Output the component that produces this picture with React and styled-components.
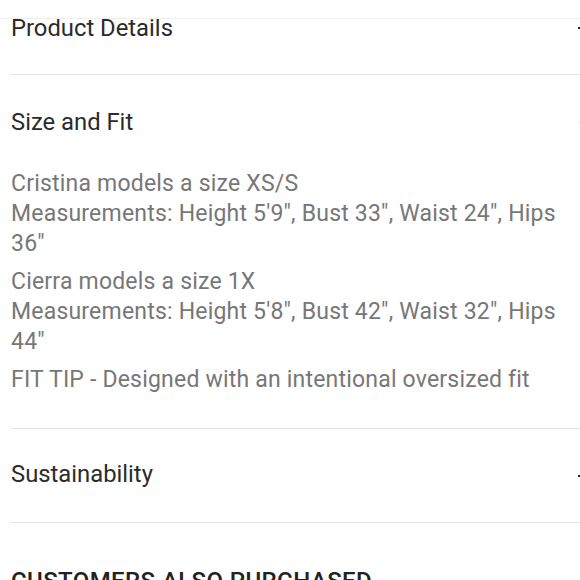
import React from "react"
import styled, { createGlobalStyle } from "styled-components"

const GlobalStyle = createGlobalStyle`
  html, body {
    margin: 0;
    padding: 0;
    background: #fff;
  }
  body {
    font-family: Roboto, "Liberation Sans", Arial, sans-serif;
    -webkit-font-smoothing: antialiased;
  }
`

const Screen = styled.div`
  width: 580px;
  height: 580px;
  display: flex;
  flex-direction: column;
  overflow: hidden;
  background: #fff;
`

const TopBar = styled.div`
  flex: 0 0 18px;
  border-bottom: 1px solid #efefef;
  background: #fff;
`

const Scroller = styled.div`
  flex: 1;
  overflow: hidden;
`

// page is scrolled a little, so the first header sits under the top bar
const Content = styled.div`
  margin-top: -38px;
  padding-left: 11px;
  width: 600px;
`

const Section = styled.section`
  border-bottom: 1px solid #e3e3e3;
`

const Header = styled.div`
  height: 93px;
  display: flex;
  align-items: center;
  justify-content: space-between;
`

const Title = styled.h3`
  margin: 0 0 ${(p) => (p.$raise ? 3 : 0)}px;
  font-size: 23.8px;
  font-weight: 400;
  color: #2b2b2b;
`

const Toggle = styled.span`
  width: 20px;
  height: 20px;
  position: relative;
  flex: 0 0 20px;
  margin-right: 13px;

  &::before,
  &::after {
    content: "";
    position: absolute;
    background: ${(p) => (p.$open ? "#f0f0f0" : "#222")};
  }
  &::before {
    left: 0;
    right: 0;
    top: 9px;
    height: 2px;
  }
  &::after {
    top: 0;
    bottom: 0;
    left: 9px;
    width: 2px;
    display: ${(p) => (p.$open ? "none" : "block")};
  }
`

const Body = styled.div`
  padding: 1px 0 33px;
  width: 556px;
`

const Para = styled.p`
  margin: 0 0 8px;
  font-size: 23px;
  line-height: 30px;
  letter-spacing: 0.2px;
  color: #777;
  font-weight: 400;

  &:last-child {
    margin-bottom: 0;
  }
`

const Heading = styled.h2`
  margin: 44px 0 0;
  font-size: 24px;
  font-weight: 500;
  color: #222;
  letter-spacing: 0.4px;
  text-transform: uppercase;
`

const sizeFit = [
  [
    "Cristina models a size XS/S",
    "Measurements: Height 5'9\", Bust 33\", Waist 24\", Hips 36\"",
  ],
  [
    "Cierra models a size 1X",
    "Measurements: Height 5'8\", Bust 42\", Waist 32\", Hips 44\"",
  ],
  ["FIT TIP - Designed with an intentional oversized fit"],
]

const AccordionItem = ({ title, open, raise, children }) => (
  <Section>
    <Header>
      <Title $raise={raise}>{title}</Title>
      <Toggle $open={open} />
    </Header>
    {open && <Body>{children}</Body>}
  </Section>
)

export default function App() {
  return (
    <Screen>
      <GlobalStyle />
      <TopBar />
      <Scroller>
        <Content>
          <AccordionItem title="Product Details" />
          <AccordionItem title="Size and Fit" open>
            {sizeFit.map((lines, i) => (
              <Para key={i}>
                {lines.map((line, j) => (
                  <React.Fragment key={j}>
                    {j > 0 && <br />}
                    {line}
                  </React.Fragment>
                ))}
              </Para>
            ))}
          </AccordionItem>
          <AccordionItem title="Sustainability" raise />
          <Heading>Customers also purchased</Heading>
        </Content>
      </Scroller>
    </Screen>
  )
}
